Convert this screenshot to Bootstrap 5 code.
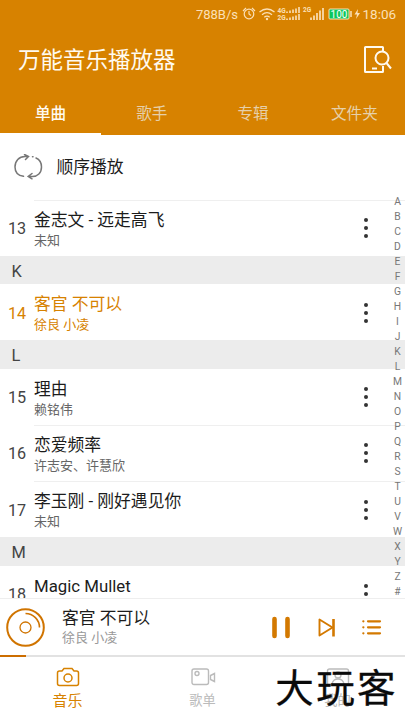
<!DOCTYPE html>
<html lang="zh-CN">
<head>
<meta charset="utf-8">
<meta name="viewport" content="width=device-width, initial-scale=1">
<title>万能音乐播放器</title>
<link href="https://cdn.jsdelivr.net/npm/bootstrap@5.3.0/dist/css/bootstrap.min.css" rel="stylesheet">
<style>
:root{--orange:#d78200}
body{font-family:Roboto,"Noto Sans CJK SC",sans-serif;color:#1c1c1c;background:#fff;height:720px;line-height:1}
svg{display:block;flex:none}
.phone{width:405px;height:720px}
.top-area{height:135px;background:var(--orange);color:#fffaf0}
.status{height:28px;color:#fbe0b8;padding-right:9px;font-size:13px}
.title-bar{height:64px;padding:0 13px 0 18px}
.title-bar h1{font-size:22.5px;font-weight:400;line-height:32px}
.tabs{height:43px}
.tabs a{font-size:15.6px;line-height:44px;color:#e6d0aa;height:43px}
.tabs a.active{color:#fffaf0;font-weight:500;border-bottom:2.5px solid #fff}
.order{height:64.5px;padding:0 14px;font-size:16.8px}
.order span{margin-left:13.5px}
.songs{height:398.5px}
.song{height:56.25px;padding-left:8px}
.num{width:26px;font-size:16.2px;color:#444;padding-top:3px}
.info{border-top:1px solid #efefef;padding-top:7px}
.name{font-size:16.8px;line-height:24px;white-space:nowrap}
.artist{font-size:13px;line-height:17px;color:#666;white-space:nowrap}
.more{margin-right:36.5px;margin-top:9.5px}
.playing .num,.playing .name,.playing .artist{color:var(--orange)}
.plain .info{border-color:transparent}
.section{height:28.25px;background:#ececec;padding-left:11.5px;font-size:16.4px;color:#444;padding-top:4px}
.letters{right:0;top:-6px;width:15px;font-size:10.3px;color:#777;z-index:2}
.letters span{height:15px;line-height:15px}
.player{height:57px;border-top:1px solid #eee;padding:0 22px 0 6px}
.player .info-now{margin-left:17px;margin-top:-3px}
.player .name{font-size:16.8px}
.player .artist{color:#999;line-height:16px}
.track{height:2px;background:#e2e2e2}
.track div{width:26px;height:2px;background:#cc6d00}
.bottom{height:63px;color:#bbb;font-size:13.2px}
.bottom a{color:inherit;padding-top:10px}
.bottom svg{margin-bottom:7px}
.bottom a.active{color:var(--orange);font-size:15px}
.brand{right:7px;bottom:5px;font-size:38.5px;letter-spacing:2.4px;line-height:52px;font-weight:400;-webkit-text-stroke:.3px #0a0a0a;color:#0a0a0a;white-space:nowrap;z-index:3}
</style>
<script src="https://cdn.jsdelivr.net/npm/bootstrap@5.3.0/dist/js/bootstrap.bundle.min.js"></script>
</head>
<body class="overflow-hidden">
<svg width="0" height="0" class="position-absolute"><defs>
<g id="dots" fill="#333"><circle cx="3" cy="3" r="2"/><circle cx="3" cy="11" r="2"/><circle cx="3" cy="19" r="2"/></g>
</defs></svg>
<div class="phone position-relative overflow-hidden d-flex flex-column">
<header class="top-area flex-shrink-0">
  <div class="status d-flex align-items-center justify-content-end">
    <span class="me-1">788B/s</span>
    <svg width="154" height="16" viewBox="0 0 154 16" fill="none" stroke="#fbe0b8">
      <circle cx="7" cy="8" r="4.8" stroke-width="1.2"/><path d="M7 5v3l2 1.500M1 5l3-3M13 5l-3-3" stroke-width="1.200"/>
      <path d="M17.500 6q7.500-6 15 0M20 8.700q5-4 10 0M22.300 11.200q2.700-2 5.400 0" stroke-width="1.300"/><circle cx="25" cy="13" r="1.200" fill="#fbe0b8" stroke="none"/>
      <g fill="#fbe0b8" stroke="none" font-size="6.500" font-weight="700"><text x="35.500" y="7">4G</text><text x="35.500" y="14">2G</text><text x="61" y="6">2G</text></g>
      <path d="M45 7V5.500M48 7V4.500M51 7V3.500M54 7V2.500M57 7V1M45 14v-1.500M48 14v-2.500M51 14v-3.500M54 14V9.500M57 14V8" stroke-width="1.600"/>
      <path d="M69 14v-2.500M72 14V9.500M75 14V7M78 14V4.500M81 14V2" stroke-width="1.700"/>
      <rect x="87" y="3" width="20" height="10" rx="1" fill="#0dc75b"/><path d="M109 5v6" stroke-width="1.500"/>
      <text x="97" y="11.700" text-anchor="middle" font-size="10" fill="#fff" stroke="none">100</text>
      <path d="M116 3l-3.500 5.500h2.500l-1 4.500 4-6h-2.500z" fill="#fbe0b8" stroke="none"/>
      <text x="120.500" y="12.800" font-size="13.500" fill="#fbe0b8" stroke="none">18:06</text>
    </svg>
  </div>
  <div class="title-bar d-flex align-items-center justify-content-between">
    <h1 class="m-0">万能音乐播放器</h1>
    <svg width="29" height="30" viewBox="0 0 29 30" fill="none" stroke="#fffaf0" stroke-width="2"><path d="M20 6V2.500Q20 2 19.500 2H2.500Q2 2 2 2.500v24q0 .5.500.5h17q.5 0 .5-.5V21M9 23.500h5"/><circle cx="19" cy="13" r="6.500"/><path d="M23.500 18l4.500 5.500"/></svg>
  </div>
  <nav class="tabs row g-0 text-center">
    <a class="col active text-decoration-none">单曲</a><a class="col text-decoration-none">歌手</a><a class="col text-decoration-none">专辑</a><a class="col text-decoration-none">文件夹</a>
  </nav>
</header>
<div class="order d-flex align-items-center flex-shrink-0">
  <svg width="29" height="26" viewBox="0 0 29 26" fill="none" stroke="#777" stroke-width="1.500" stroke-linecap="round"><path d="M9.500 22.300C3.500 21.500 1 17.500 1 13 1 7 5 2.500 11 2.500h3M10.500.500l4 2-3 3M18.500 2.800h.5M22 4c3.500 1.500 5.500 5 5.500 9 0 6-4 9.500-9 9.500h-4M18 19.500l-3.800 3 3.800 2.300"/></svg>
  <span>顺序播放</span>
</div>
<div class="position-relative flex-shrink-0">
<main class="songs overflow-hidden">
  <div class="song d-flex"><div class="num d-flex align-items-center">13</div><div class="info flex-fill d-flex"><div class="flex-fill"><div class="name">金志文 - 远走高飞</div><div class="artist">未知</div></div><svg class="more align-self-start" width="6" height="22"><use href="#dots"/></svg></div></div>
  <div class="section d-flex align-items-center">K</div>
  <div class="song playing plain d-flex"><div class="num d-flex align-items-center">14</div><div class="info flex-fill d-flex"><div class="flex-fill"><div class="name">客官 不可以</div><div class="artist">徐良 小凌</div></div><svg class="more align-self-start" width="6" height="22"><use href="#dots"/></svg></div></div>
  <div class="section d-flex align-items-center">L</div>
  <div class="song plain d-flex"><div class="num d-flex align-items-center">15</div><div class="info flex-fill d-flex"><div class="flex-fill"><div class="name">理由</div><div class="artist">赖铭伟</div></div><svg class="more align-self-start" width="6" height="22"><use href="#dots"/></svg></div></div>
  <div class="song d-flex"><div class="num d-flex align-items-center">16</div><div class="info flex-fill d-flex"><div class="flex-fill"><div class="name">恋爱频率</div><div class="artist">许志安、许慧欣</div></div><svg class="more align-self-start" width="6" height="22"><use href="#dots"/></svg></div></div>
  <div class="song d-flex"><div class="num d-flex align-items-center">17</div><div class="info flex-fill d-flex"><div class="flex-fill"><div class="name">李玉刚 - 刚好遇见你</div><div class="artist">未知</div></div><svg class="more align-self-start" width="6" height="22"><use href="#dots"/></svg></div></div>
  <div class="section d-flex align-items-center">M</div>
  <div class="song plain d-flex"><div class="num d-flex align-items-center">18</div><div class="info flex-fill d-flex"><div class="flex-fill"><div class="name">Magic Mullet</div></div><svg class="more align-self-start" width="6" height="22"><use href="#dots"/></svg></div></div>
</main>
<div class="letters position-absolute d-flex flex-column text-center"><span>A</span><span>B</span><span>C</span><span>D</span><span>E</span><span>F</span><span>G</span><span>H</span><span>I</span><span>J</span><span>K</span><span>L</span><span>M</span><span>N</span><span>O</span><span>P</span><span>Q</span><span>R</span><span>S</span><span>T</span><span>U</span><span>V</span><span>W</span><span>X</span><span>Y</span><span>Z</span><span>#</span></div>
</div>
<section class="player d-flex align-items-center flex-shrink-0">
  <svg width="39" height="39" viewBox="0 0 39 39" fill="none" stroke="#d07400"><circle cx="19.500" cy="19.500" r="18.300" stroke-width="2"/><circle cx="19.500" cy="19.500" r="5.500" stroke-width="1.300"/><path d="M19.500 5.500a14 14 0 0 1 14 14" stroke-width="1.600"/></svg>
  <div class="info-now flex-fill"><div class="name">客官 不可以</div><div class="artist">徐良 小凌</div></div>
  <svg width="112" height="24" viewBox="0 0 112 24" fill="none" stroke="#d37900" stroke-linecap="round" stroke-linejoin="round"><path d="M3.500 4v17M16.500 4v17" stroke-width="4.600"/><path d="M48.500 4.500v16l13-8z" stroke-width="1.900"/><path d="M62.500 4v17.500" stroke-width="2.600" stroke-linecap="butt"/><path d="M97 6.300h12M97 12.300h12M97 18.300h12M92.300 6.300h.1M92.300 12.300h.1M92.300 18.300h.1" stroke-width="2.200"/></svg>
</section>
<div class="track flex-shrink-0"><div></div></div>
<nav class="bottom row g-0 text-center flex-shrink-0">
  <a class="col active d-flex flex-column align-items-center text-decoration-none"><svg width="24" height="20" viewBox="0 0 24 20" fill="none" stroke="currentColor" stroke-width="1.500"><path d="M3.500 4H6l2-2.500h8L18 4h2.500q2 0 2 2v10.500q0 2-2 2h-17q-2 0-2-2V6q0-2 2-2z"/><circle cx="12" cy="11" r="4"/></svg>音乐</a>
  <a class="col d-flex flex-column align-items-center text-decoration-none"><svg width="26" height="20" viewBox="-2 0 26 20" fill="none" stroke="currentColor" stroke-width="1.400"><rect x="0" y="2" width="16.500" height="15.500" rx="2"/><circle cx="5" cy="6.500" r="2"/><path d="M22.500 6.500v8l-4-2V8.500z"/></svg>歌单</a>
  <a class="col d-flex flex-column align-items-center text-decoration-none"><svg width="24" height="20" viewBox="0 0 24 20" fill="none" stroke="currentColor" stroke-width="1.400"><rect x="1.500" y="2" width="21" height="16" rx="2"/><circle cx="12" cy="8" r="3"/><path d="M6 17q1-5 6-5t6 5"/></svg>我的</a>
</nav>
<div class="brand position-absolute">大玩客</div>
</div>
</body>
</html>
